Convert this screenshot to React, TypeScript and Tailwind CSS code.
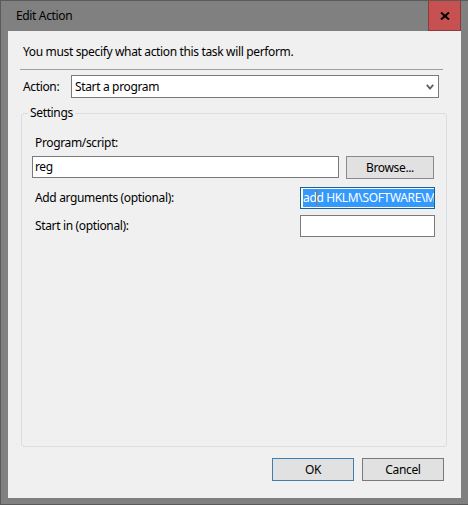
import React from "react";

const font = { fontFamily: '"Noto Sans", "Segoe UI", sans-serif' };

export default function App() {
  return (
    <div className="w-[468px] h-[507px] bg-white text-[12px] leading-[16px] tracking-[-0.35px] text-black" style={font}>
      <div className="w-[468px] h-[505px] bg-[#808080] border-l border-b border-t border-[#5a5a5a] flex flex-col">
        {/* title bar */}
        <div className="h-[30px] flex items-start">
          <div className="flex-1 h-[30px] flex items-center pl-[15px] text-[12px] text-black">Edit Action</div>
          <div className="w-[33px] h-[30px] mr-[7px] bg-[#c75050] border-l border-r border-b border-[#8a3b3b] flex items-center justify-center">
            <svg width="10" height="8" viewBox="0 0 10 8">
              <path d="M1 0.5 L9 7.5 M9 0.5 L1 7.5" stroke="#000" strokeWidth="2" />
            </svg>
          </div>
        </div>
        {/* content */}
        <div className="flex-1 ml-[7px] mr-[7px] mb-[6px] bg-[#f0f0f0] flex flex-col">
          <div className="mt-[13px] pl-[15px] h-[16px]">You must specify what action this task will perform.</div>
          <div className="mt-[9px] ml-[12px] w-[423px] h-px bg-[#a0a0a0]" />
          <div className="mt-[5px] h-[23px] flex items-center">
            <div className="pl-[15px] w-[63px]">Action:</div>
            <div className="w-[368px] h-[23px] bg-white border border-[#7a7a7a] flex items-center pl-[3px] pr-[4px]">
              <div className="flex-1">Start a program</div>
              <svg width="8" height="6" viewBox="0 0 8 6">
                <path d="M0.8 0.8 L4 4.5 L7.2 0.8" stroke="#606060" strokeWidth="1.8" fill="none" />
              </svg>
            </div>
          </div>
          {/* group box */}
          <div className="mt-[15px] ml-[13px] w-[426px] flex-1 relative border border-[#d9dee3] rounded-[3px] flex flex-col">
            <span className="absolute left-[6px] top-[-9px] px-[2px] bg-[#f0f0f0] leading-[16px]">Settings</span>
            <div className="mt-[21px] pl-[13px] h-[16px]">Program/script:</div>
            <div className="mt-[5px] flex items-start pl-[10px]">
              <div className="w-[307px] h-[22px] bg-white border border-[#7a7a7a] flex items-center pl-[2px]">reg</div>
              <div className="ml-[7px] w-[88px] h-[23px] bg-[#e1e1e1] border border-[#8a8a8a] flex items-center justify-center">Browse...</div>
            </div>
            <div className="mt-[8px] flex items-center">
              <div className="pl-[13px] w-[278px]">Add arguments (optional):</div>
              <div className="w-[135px] h-[22px] bg-white border border-[#1a6388] flex items-center pl-[2px] overflow-hidden">
                <span className="bg-[#3399ff] text-white whitespace-nowrap leading-[18px]">
                  ad<span className="relative">d<span className="absolute left-0 top-[1px] w-px h-[15px] bg-[#b8651b]" /></span> HKLM\SOFTWARE\Microsoft
                </span>
              </div>
            </div>
            <div className="mt-[6px] flex items-center">
              <div className="pl-[13px] w-[278px]">Start in (optional):</div>
              <div className="w-[135px] h-[22px] bg-white border border-[#7a7a7a]" />
            </div>
          </div>
          <div className="mt-[11px] mb-[17px] flex justify-end pr-[17px] gap-[8px]">
            <div className="w-[82px] h-[23px] bg-[#e1e1e1] border border-[#3c7fb1] flex items-center justify-center">OK</div>
            <div className="w-[82px] h-[23px] bg-[#e1e1e1] border border-[#7a7a7a] flex items-center justify-center">Cancel</div>
          </div>
        </div>
      </div>
    </div>
  );
}
